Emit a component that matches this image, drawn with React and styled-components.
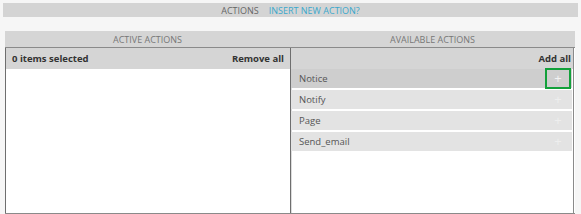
import styled, { createGlobalStyle } from "styled-components";

const Global = createGlobalStyle`
  html, body {
    margin: 0;
    padding: 0;
    background: #f6f6f6;
    font-family: "Open Sans", "DejaVu Sans", sans-serif;
  }
`;

const Page = styled.div`
  width: 581px;
  height: 214px;
  padding: 3px 3px 0 3px;
  box-sizing: border-box;
`;

const TopBar = styled.div`
  height: 14px;
  background: #d4d4d4;
  display: flex;
  align-items: center;
  justify-content: center;
  gap: 10px;
  font-size: 9px;
  text-transform: uppercase;
  color: #666;
`;

const Link = styled.a`
  color: #3ba8cc;
  text-decoration: none;
  cursor: pointer;
`;

const Panel = styled.div`
  margin: 14px 3px 0 2px;
  width: 570px;
`;

const HeaderRow = styled.div`
  display: grid;
  grid-template-columns: 285px 285px;
  height: 16px;
  background: #d5d5d5;
`;

const HeaderCell = styled.div`
  display: flex;
  align-items: center;
  justify-content: center;
  font-size: 9px;
  color: #777;
  text-transform: uppercase;
`;

const Lists = styled.div`
  display: grid;
  grid-template-columns: 285px 284px;
  height: 165px;
  border-top: 1px solid #8a8a8a;
  border-bottom: 2px solid #8a8a8a;
  background: #fff;
`;

const Pane = styled.div`
  border-left: 1px solid #6e6e6e;
  border-right: ${(p) => (p.$last ? "1px solid #8a8a8a" : "none")};
  box-shadow: ${(p) => (p.$last ? "inset 1px 0 0 #dcdcdc" : "none")};
  display: flex;
  flex-direction: column;
`;

const Toolbar = styled.div`
  height: 21px;
  flex: none;
  background: #d5d5d5;
  display: flex;
  align-items: center;
  justify-content: ${(p) => (p.$end ? "flex-end" : "space-between")};
  padding: 0 ${(p) => (p.$end ? "2px" : "6px")} 0 6px;
  font-size: 9.5px;
  font-weight: 700;
  color: #333;
`;

const ActionRow = styled.div`
  height: 19px;
  margin-bottom: 2px;
  margin-right: 1px;
  background: ${(p) => (p.$hover ? "#cecece" : "#e3e3e3")};
  display: flex;
  align-items: center;
  justify-content: space-between;
  padding-left: 8px;
  font-size: 9.5px;
  color: #555;
`;

const AddButton = styled.span`
  width: 22px;
  height: 17px;
  margin-right: 1px;
  display: flex;
  align-items: center;
  justify-content: center;
  border: 2px solid ${(p) => (p.$focus ? "#12a03a" : "transparent")};
  color: ${(p) => (p.$focus ? "#f2f2f2" : "#eeeeee")};
  font-size: 13px;
  line-height: 1;
`;

const actions = ["Notice", "Notify", "Page", "Send_email"];

export default function App() {
  return (
    <Page>
      <Global />
      <TopBar>
        <span>Actions</span>
        <Link>Insert new action?</Link>
      </TopBar>
      <Panel>
        <HeaderRow>
          <HeaderCell>Active actions</HeaderCell>
          <HeaderCell>Available actions</HeaderCell>
        </HeaderRow>
        <Lists>
          <Pane>
            <Toolbar>
              <span>0 items selected</span>
              <span>Remove all</span>
            </Toolbar>
          </Pane>
          <Pane $last>
            <Toolbar $end>
              <span>Add all</span>
            </Toolbar>
            {actions.map((a, i) => (
              <ActionRow key={a} $hover={i === 0}>
                <span>{a}</span>
                <AddButton $focus={i === 0}>+</AddButton>
              </ActionRow>
            ))}
          </Pane>
        </Lists>
      </Panel>
    </Page>
  );
}
